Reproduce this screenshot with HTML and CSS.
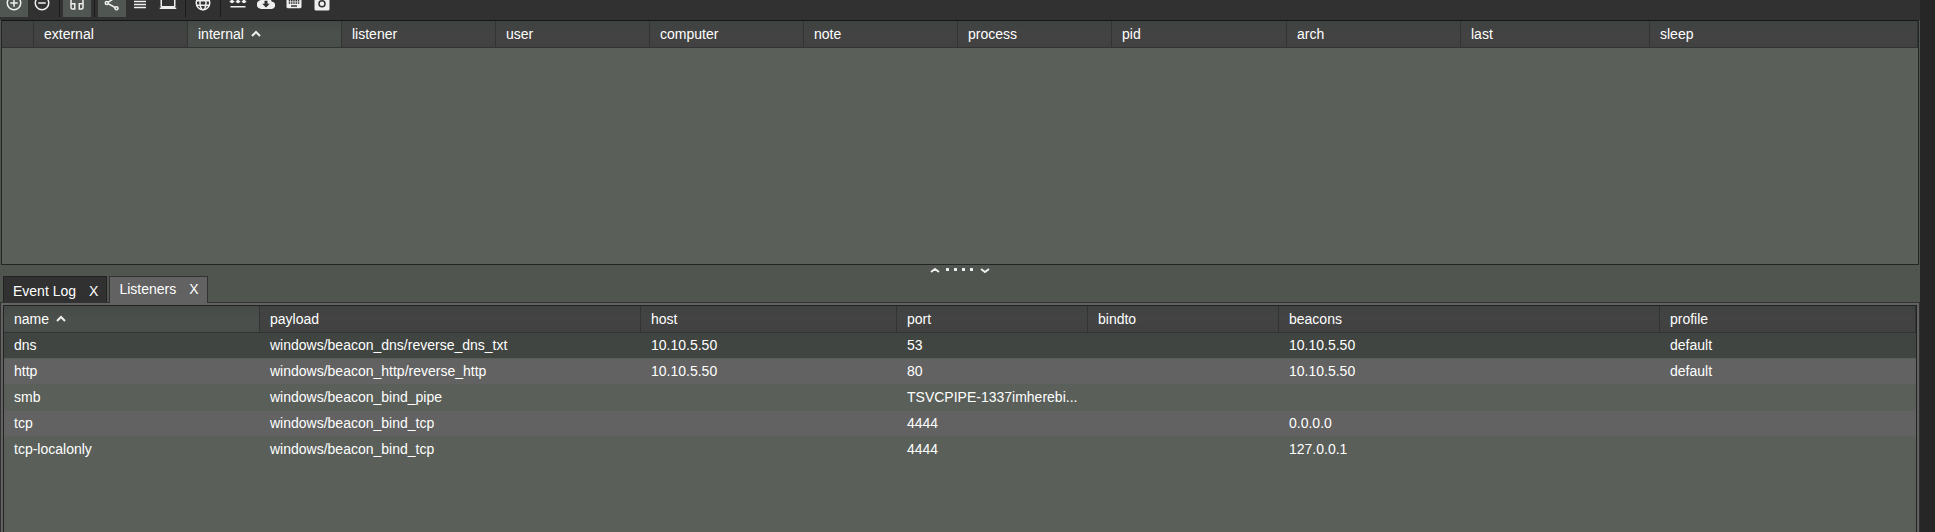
FILE: index.html
```html
<!DOCTYPE html>
<html lang="en">
<head>
<meta charset="utf-8">
<title>Listeners</title>
<link rel="stylesheet" href="styles.css">
</head>
<body>
<div class="app">
  <div class="toolbar" role="toolbar" aria-label="Main">
    <button class="tool on" aria-label="Connect"><svg viewBox="0 0 24 24"><path d="M13 7h-2v4H7v2h4v4h2v-4h4v-2h-4V7zm-1-5a10 10 0 100 20 10 10 0 000-20zm0 18a8 8 0 110-16 8 8 0 010 16z"/></svg></button>
    <button class="tool" aria-label="Disconnect"><svg viewBox="0 0 24 24"><path d="M7 11v2h10v-2H7zm5-9a10 10 0 100 20 10 10 0 000-20zm0 18a8 8 0 110-16 8 8 0 010 16z"/></svg></button>
    <span class="sep"></span>
    <button class="tool on" aria-label="Listeners"><svg viewBox="0 0 24 24"><path d="M12 1a9 9 0 00-9 9v8a3 3 0 003 3h4v-9H5v-2a7 7 0 0114 0v2h-5v9h4a3 3 0 003-3v-8a9 9 0 00-9-9zM8 14v5H6a1 1 0 01-1-1v-4zm11 0v4a1 1 0 01-1 1h-2v-5z"/></svg></button>
    <span class="sep"></span>
    <button class="tool on" aria-label="Pivot graph"><svg viewBox="0 0 24 24"><path d="M18 4L5 12l13 7" fill="none" stroke="#eee" stroke-width="2"/><circle cx="18" cy="4" r="3"/><circle cx="5" cy="12" r="3"/><circle cx="18" cy="19" r="3"/><circle class="hole" cx="5" cy="12" r="1"/><circle class="hole" cx="18" cy="19" r="1"/></svg></button>
    <button class="tool" aria-label="Session table"><svg viewBox="0 0 24 24"><path d="M4 15h16v-2H4zm0 4h16v-2H4zm0-8h16V9H4zm0-6v2h16V5z"/></svg></button>
    <button class="tool" aria-label="Target table"><svg viewBox="0 0 24 24"><path d="M20 18a2 2 0 002-2V5a2 2 0 00-2-2H4a2 2 0 00-2 2v11a2 2 0 002 2H1v2h22v-2zM4 5h16v11H4z"/></svg></button>
    <span class="sep"></span>
    <button class="tool" aria-label="Web"><svg viewBox="0 0 24 24"><g fill="none" stroke="#eee" stroke-width="2"><circle cx="12" cy="12" r="9"/><ellipse cx="12" cy="12" rx="4" ry="9"/><path d="M3 9h18M3 15h18"/></g></svg></button>
    <span class="sep"></span>
    <button class="tool" aria-label="Credentials"><svg viewBox="0 0 24 24"><path d="M2 16h20v2H2z"/><path d="M1 10h6M3 7l2 5M5 7l-2 5M9 10h6M11 7l2 5M13 7l-2 5M17 10h6M19 7l2 5M21 7l-2 5" fill="none" stroke="#eee" stroke-width="2"/></svg></button>
    <button class="tool" aria-label="Downloads"><svg viewBox="0 0 24 24"><path d="M19.400 10A7.500 7.500 0 0012 4a7.500 7.500 0 00-6.600 4A6 6 0 006 20h13a5 5 0 00.4-10zM17 13l-5 5-5-5h3V9h4v4z"/></svg></button>
    <button class="tool" aria-label="Keystrokes"><svg viewBox="0 0 24 24"><path d="M20 5H4a2 2 0 00-2 2v10a2 2 0 002 2h16a2 2 0 002-2V7a2 2 0 00-2-2zm-9 3h2v2h-2zm0 3h2v2h-2zM8 8h2v2H8zm0 3h2v2H8zm-1 2H5v-2h2zm0-3H5V8h2zm9 7H8v-2h8zm0-4h-2v-2h2zm0-3h-2V8h2zm3 3h-2v-2h2zm0-3h-2V8h2z"/></svg></button>
    <button class="tool" aria-label="Screenshots"><svg viewBox="0 0 24 24"><path d="M20 4h-3l-2-2H9L7 4H4a2 2 0 00-2 2v14a2 2 0 002 2h16a2 2 0 002-2V6a2 2 0 00-2-2z"/><circle class="hole" cx="12" cy="13" r="5"/><circle cx="12" cy="13" r="3"/></svg></button>
  </div>

  <section class="sessions">
    <table class="grid">
      <colgroup><col class="w32"><col class="w154"><col class="w154"><col class="w154"><col class="w154"><col class="w154"><col class="w154"><col class="w154"><col class="w175"><col class="w174"><col class="w189"><col class="w268"></colgroup>
      <thead><tr><th></th><th>external</th><th class="sorted">internal<svg class="caret" viewBox="0 0 10 7"><path d="M1 6l4-4 4 4"/></svg></th><th>listener</th><th>user</th><th>computer</th><th>note</th><th>process</th><th>pid</th><th>arch</th><th>last</th><th>sleep</th></tr></thead>
    </table>
  </section>

  <div class="splitter"><svg viewBox="0 0 60 7"><path d="M1 6l4-3 4 3M51 3l4 3 4-3"/><path class="dots" d="M16 2h3v3h-3zM24 2h3v3h-3zM32 2h3v3h-3zM40 2h3v3h-3z"/></svg></div>

  <div class="tabs">
    <div class="tab"><button class="label">Event Log</button><button class="close" aria-label="Close Event Log">X</button></div>
    <div class="tab active"><button class="label">Listeners</button><button class="close" aria-label="Close Listeners">X</button></div>
  </div>

  <section class="panel">
    <div class="listeners">
      <table class="grid">
        <colgroup><col class="w256"><col class="w381"><col class="w256"><col class="w191"><col class="w191"><col class="w381"><col class="w256"></colgroup>
        <thead><tr><th class="sorted">name<svg class="caret" viewBox="0 0 10 7"><path d="M1 6l4-4 4 4"/></svg></th><th>payload</th><th>host</th><th>port</th><th>bindto</th><th>beacons</th><th>profile</th></tr></thead>
        <tbody>
          <tr class="selected"><td>dns</td><td>windows/beacon_dns/reverse_dns_txt</td><td>10.10.5.50</td><td>53</td><td></td><td>10.10.5.50</td><td>default</td></tr>
          <tr><td>http</td><td>windows/beacon_http/reverse_http</td><td>10.10.5.50</td><td>80</td><td></td><td>10.10.5.50</td><td>default</td></tr>
          <tr><td>smb</td><td>windows/beacon_bind_pipe</td><td></td><td>TSVCPIPE-1337imherebi...</td><td></td><td></td><td></td></tr>
          <tr><td>tcp</td><td>windows/beacon_bind_tcp</td><td></td><td>4444</td><td></td><td>0.0.0.0</td><td></td></tr>
          <tr><td>tcp-localonly</td><td>windows/beacon_bind_tcp</td><td></td><td>4444</td><td></td><td>127.0.0.1</td><td></td></tr>
        </tbody>
      </table>
    </div>
  </section>
</div>
</body>
</html>
```

FILE: styles.css
```css
* { box-sizing: border-box; }

body {
  margin: 0;
  background: #262626;
  color: #fff;
  font: 14px/16px "Liberation Sans", Arial, sans-serif;
}

button {
  border: 0;
  padding: 0;
  background: none;
  color: inherit;
  font: inherit;
}

.app {
  display: flex;
  flex-direction: column;
  height: 100vh;
  margin-right: 15px;
  background: #505550;
}

.toolbar {
  display: flex;
  align-items: flex-end;
  flex: none;
  height: 20px;
  padding-bottom: 3px;
  overflow: hidden;
  background: #313131;
}

.tool {
  display: flex;
  align-items: center;
  justify-content: center;
  flex: none;
  width: 28px;
  height: 28px;
}

.tool.on { background: #505752; }

.tool svg {
  width: 18px;
  height: 18px;
  fill: #eee;
}

.tool .hole { fill: #313131; }
.tool.on .hole { fill: #505752; }

.sep {
  flex: none;
  width: 1px;
  height: 28px;
  margin: 0 3px;
  background: #1c1c1c;
}

.sessions {
  flex: 245 1 0;
  min-height: 30px;
  margin: 0 1px;
  border: 1px solid #232625;
  border-top-color: #121615;
  background: #5a5f5a;
}

.grid {
  width: 100%;
  table-layout: fixed;
  border-collapse: separate;
  border-spacing: 0;
}

.grid th,
.grid td {
  overflow: hidden;
  padding: 0 0 0 10px;
  font-weight: normal;
  text-align: left;
  white-space: nowrap;
}

.grid th {
  height: 27px;
  border-right: 1px solid #303433;
  border-bottom: 1px solid #303433;
  background: linear-gradient(#3e4340, #434343 50%, #414141);
}

.grid th.sorted { background: linear-gradient(#454a46, #4b504c 50%, #494e4a); }

.grid td {
  height: 26px;
  border-bottom: 1px solid #5a5f5a;
}

tbody tr:nth-child(even) { background: #626262; }
tbody tr.selected { background: #414541; }

.caret {
  width: 10px;
  height: 7px;
  margin-left: 7px;
  vertical-align: 2px;
  fill: none;
  stroke: #eee;
  stroke-width: 2;
}

.w32 { width: 32px; }
.w154 { width: 154px; }
.w174 { width: 174px; }
.w175 { width: 175px; }
.w189 { width: 189px; }
.w191 { width: 191px; }
.w256 { width: 256px; }
.w268 { width: 268px; }
.w381 { width: 381px; }

.splitter {
  display: flex;
  justify-content: center;
  flex: none;
  height: 11px;
  padding-top: 1px;
}

.splitter svg {
  width: 60px;
  height: 7px;
  fill: none;
  stroke: #eee;
  stroke-width: 2;
}

.splitter .dots {
  fill: #eee;
  stroke: none;
}

.tabs {
  display: flex;
  gap: 2px;
  flex: none;
  height: 27px;
  padding-left: 3px;
  border-bottom: 1px solid #323232;
}

.tab {
  display: flex;
  align-items: center;
  gap: 13px;
  height: 26px;
  padding: 3px 8px 0 9px;
  border: 1px solid #222;
  border-bottom: 0;
  background: #313131;
}

.tab.active {
  height: 27px;
  padding: 0 8px 2px 9px;
  border-color: #323232;
  background: #626262;
}

.panel {
  display: flex;
  flex: 229 1 0;
  min-height: 160px;
  padding: 2px 2px 0;
  border: solid #323232;
  border-width: 0 1px;
  background: #626262;
}

.listeners {
  flex: 1;
  border: 1px solid #222;
  border-bottom: 0;
  background: #5a5f5a;
}
```
